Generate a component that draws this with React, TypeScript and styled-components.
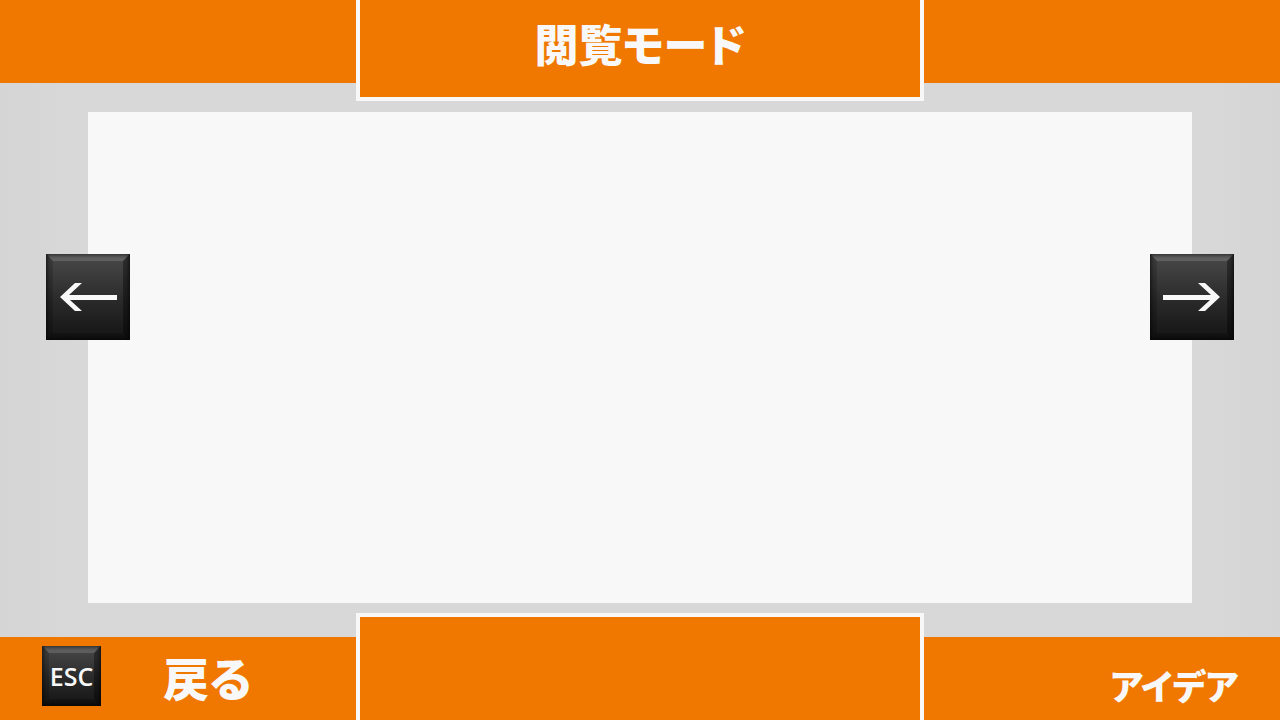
import React from "react";
import styled, { createGlobalStyle, css } from "styled-components";

const orange = "#f07800";
const paper = "#f8f8f8";

const GlobalStyle = createGlobalStyle`
  *, *::before, *::after { box-sizing: border-box; }
  body {
    margin: 0;
    color: ${paper};
    font-family: "Noto Sans CJK JP", sans-serif;
    font-feature-settings: "palt";
  }
`;

const Page = styled.div`
  display: flex;
  flex-direction: column;
  min-height: 100vh;
  background: linear-gradient(90deg, #d5d5d5, #d8d8d8 6%, #d8d8d8 94%, #d5d5d5);
`;

const Bar = styled.div<{ $edge: "top" | "bottom" }>`
  display: grid;
  grid-template-columns: 1fr minmax(auto, 568px) 1fr;
  align-items: ${(p) => (p.$edge === "top" ? "start" : "end")};
`;

const Side = styled.div<{ $end?: boolean }>`
  display: flex;
  align-items: center;
  justify-content: ${(p) => (p.$end ? "flex-end" : "flex-start")};
  height: 83px;
  padding: 0 42px;
  background: ${orange};
`;

const Tab = styled.div<{ $edge: "top" | "bottom" }>`
  display: flex;
  align-items: center;
  justify-content: center;
  height: ${(p) => (p.$edge === "top" ? 101 : 107)}px;
  padding-bottom: 12px;
  border: 4px solid ${paper};
  border-${(p) => p.$edge}: 0;
  background: ${orange};
`;

const Title = styled.h1`
  margin: 0;
  font-size: 44px;
  font-weight: 900;
  line-height: 60px;
`;

const Viewer = styled.main`
  flex: 1;
  display: grid;
  grid-template-columns: 84px 1fr 84px;
  padding: 11px 46px 10px;
`;

const Sheet = styled.section`
  grid-area: 1 / 1 / 2 / -1;
  min-height: 320px;
  margin: 0 42px;
  background: ${paper};
`;

/* Glossy black key: translucent bevel edges over one vertical gradient. */
const keyFace = css`
  position: relative;
  display: grid;
  place-items: center;
  border: 7px solid;
  border-color: rgba(255, 255, 255, 0.14) rgba(0, 0, 0, 0.35) rgba(0, 0, 0, 0.2) rgba(0, 0, 0, 0.15);
  background: linear-gradient(#4a4a4a, #2c2c2c 50%, #141414) border-box;
  color: ${paper};

  &::after {
    content: "";
    position: absolute;
    inset: -7px;
    box-shadow: inset 0 0 4px 1px rgba(0, 0, 0, 0.7);
  }
`;

const ArrowButton = styled.button<{ $column: number }>`
  ${keyFace}
  grid-area: 1 / ${(p) => p.$column};
  width: 84px;
  height: 86px;
  margin: 142px 0 0;
  padding: 0;
  cursor: pointer;
`;

const ArrowIcon = styled.svg`
  display: block;
  width: 70px;
  height: 72px;
  fill: ${paper};
`;

const BackButton = styled.button`
  display: flex;
  align-items: center;
  gap: 62px;
  margin: 0;
  padding: 0 0 6px;
  border: 0;
  background: none;
  color: inherit;
  font: inherit;
  font-feature-settings: inherit;
  cursor: pointer;
`;

const Key = styled.kbd`
  ${keyFace}
  width: 59px;
  height: 60px;
  font: 600 25px/30px "Open Sans", sans-serif;
`;

const BackLabel = styled.span`
  font-size: 46px;
  font-weight: 900;
  line-height: 60px;
`;

const Category = styled.p`
  margin: 0;
  padding-top: 12px;
  font-size: 35px;
  font-weight: 900;
  line-height: 48px;
`;

export default function App() {
  return (
    <Page>
      <GlobalStyle />
      <Bar as="header" $edge="top">
        <Side />
        <Tab $edge="top">
          <Title>閲覧モード</Title>
        </Tab>
        <Side />
      </Bar>
      <Viewer>
        <Sheet aria-label="閲覧モード" />
        <ArrowButton type="button" aria-label="前へ" $column={1}>
          <ArrowIcon viewBox="7 7 70 72" aria-hidden="true">
            <path d="M14 43 29 29H36L23 41H71V46H24L36 57H29Z" />
          </ArrowIcon>
        </ArrowButton>
        <ArrowButton type="button" aria-label="次へ" $column={3}>
          <ArrowIcon viewBox="7 7 70 72" aria-hidden="true">
            <path d="M70 43 55 29H48L61 41H13V46H60L48 57H55Z" />
          </ArrowIcon>
        </ArrowButton>
      </Viewer>
      <Bar as="footer" $edge="bottom">
        <Side>
          <BackButton type="button">
            <Key>ESC</Key>
            <BackLabel>戻る</BackLabel>
          </BackButton>
        </Side>
        <Tab $edge="bottom" />
        <Side $end>
          <Category>アイデア</Category>
        </Side>
      </Bar>
    </Page>
  );
}
